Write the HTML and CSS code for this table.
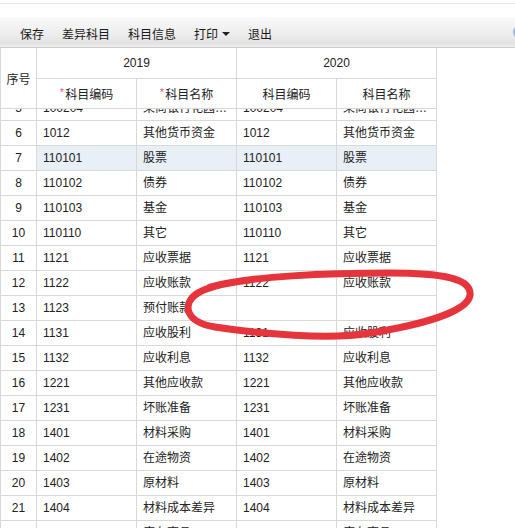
FILE: index.html
```html
<!DOCTYPE html>
<html lang="zh">
<head>
<meta charset="utf-8">
<title>科目对照</title>
<link rel="stylesheet" href="styles.css">
</head>
<body>
<div class="page">
  <div class="topline"></div>
  <div class="toolbar">
    <span class="tb-item">保存</span>
    <span class="tb-item">差异科目</span>
    <span class="tb-item">科目信息</span>
    <span class="tb-item tb-drop">打印<i class="caret"></i></span>
    <span class="tb-item">退出</span>
    <span class="tb-edge"></span>
  </div>
  <div class="grid-head">
    <div class="hc seq-h">序号</div>
    <div class="hc year">2019</div>
    <div class="hc year">2020</div>
    <div class="hc"><span class="req">*</span>科目编码</div>
    <div class="hc"><span class="req">*</span>科目名称</div>
    <div class="hc">科目编码</div>
    <div class="hc">科目名称</div>
  </div>
  <div class="body-wrap">
    <div class="grid-body">
      <div class="row"><div class="c seq">5</div><div class="c">100204</div><div class="c">某商银行花园支行</div><div class="c">100204</div><div class="c">某商银行花园支行</div></div>
      <div class="row"><div class="c seq">6</div><div class="c">1012</div><div class="c">其他货币资金</div><div class="c">1012</div><div class="c">其他货币资金</div></div>
      <div class="row sel"><div class="c seq">7</div><div class="c">110101</div><div class="c">股票</div><div class="c">110101</div><div class="c">股票</div></div>
      <div class="row"><div class="c seq">8</div><div class="c">110102</div><div class="c">债券</div><div class="c">110102</div><div class="c">债券</div></div>
      <div class="row"><div class="c seq">9</div><div class="c">110103</div><div class="c">基金</div><div class="c">110103</div><div class="c">基金</div></div>
      <div class="row"><div class="c seq">10</div><div class="c">110110</div><div class="c">其它</div><div class="c">110110</div><div class="c">其它</div></div>
      <div class="row"><div class="c seq">11</div><div class="c">1121</div><div class="c">应收票据</div><div class="c">1121</div><div class="c">应收票据</div></div>
      <div class="row"><div class="c seq">12</div><div class="c">1122</div><div class="c">应收账款</div><div class="c">1122</div><div class="c">应收账款</div></div>
      <div class="row"><div class="c seq">13</div><div class="c">1123</div><div class="c">预付账款</div><div class="c"></div><div class="c"></div></div>
      <div class="row"><div class="c seq">14</div><div class="c">1131</div><div class="c">应收股利</div><div class="c">1131</div><div class="c">应收股利</div></div>
      <div class="row"><div class="c seq">15</div><div class="c">1132</div><div class="c">应收利息</div><div class="c">1132</div><div class="c">应收利息</div></div>
      <div class="row"><div class="c seq">16</div><div class="c">1221</div><div class="c">其他应收款</div><div class="c">1221</div><div class="c">其他应收款</div></div>
      <div class="row"><div class="c seq">17</div><div class="c">1231</div><div class="c">坏账准备</div><div class="c">1231</div><div class="c">坏账准备</div></div>
      <div class="row"><div class="c seq">18</div><div class="c">1401</div><div class="c">材料采购</div><div class="c">1401</div><div class="c">材料采购</div></div>
      <div class="row"><div class="c seq">19</div><div class="c">1402</div><div class="c">在途物资</div><div class="c">1402</div><div class="c">在途物资</div></div>
      <div class="row"><div class="c seq">20</div><div class="c">1403</div><div class="c">原材料</div><div class="c">1403</div><div class="c">原材料</div></div>
      <div class="row"><div class="c seq">21</div><div class="c">1404</div><div class="c">材料成本差异</div><div class="c">1404</div><div class="c">材料成本差异</div></div>
      <div class="row"><div class="c seq">22</div><div class="c">1405</div><div class="c">库存商品</div><div class="c">1405</div><div class="c">库存商品</div></div>
    </div>
  </div>
  <svg class="mark" width="515" height="528" viewBox="0 0 515 528" aria-hidden="true">
    <path d="M 210 287 C 250 276, 330 273, 390 273 C 440 273, 472 278, 470 295 C 468 312, 420 325, 370 333 C 330 340, 260 334, 215 327 C 185 322, 183 305, 195 295 C 205 287, 225 283, 250 280" fill="none" stroke="#e6343c" stroke-width="7" stroke-linecap="round" stroke-linejoin="round"/>
  </svg>
</div>
</body>
</html>
```
FILE: styles.css
```css
* { box-sizing: border-box; }
html, body { margin: 0; height: 100%; }
body {
  font-family: "Liberation Sans", "Noto Sans CJK SC", sans-serif;
  font-size: 12px;
  color: #222;
  background: #fff;
}
.page {
  position: relative;
  height: 100%;
  display: flex;
  flex-direction: column;
  overflow: hidden;
  padding-top: 3px;
}
.topline {
  height: 1px;
  background: #e8e8e8;
  margin-bottom: 13px;
  flex-shrink: 0;
}
.toolbar {
  position: relative;
  flex-shrink: 0;
  height: 31px;
  padding: 2px 0 0 20px;
  display: flex;
  align-items: center;
  gap: 18px;
  background: linear-gradient(#f9f9f9, #ececec 60%, #e2e2e2 88%, #f0f0f0);
  border-bottom: 1px solid #cccccc;
}
.tb-item { white-space: nowrap; color: #1a1a1a; }
.tb-drop { display: flex; align-items: center; gap: 4px; }
.caret {
  display: inline-block;
  width: 0; height: 0;
  border-left: 4px solid transparent;
  border-right: 4px solid transparent;
  border-top: 4px solid #222;
  margin-top: 2px;
}
.tb-edge {
  position: absolute;
  right: -8px;
  top: 9px;
  width: 10px;
  height: 12px;
  border-radius: 50%;
  border: 2px solid #9fb6d6;
}
.grid-head {
  flex-shrink: 0;
  display: grid;
  grid-template-columns: 37px repeat(4, 100px);
  grid-template-rows: 31px 30px;
  width: 437px;
}
.hc {
  display: flex;
  align-items: center;
  justify-content: center;
  border-right: 1px solid #d9d9d9;
  border-bottom: 1px solid #d9d9d9;
  color: #222;
  white-space: nowrap;
}
.seq-h { grid-row: 1 / span 2; border-left: 1px solid #d9d9d9; }
.year { grid-column: span 2; }
.req { color: #e0607a; font-size: 11px; margin-right: 1px; position: relative; top: -2px; }
.body-wrap { flex: 1; overflow: hidden; }
.grid-body { margin-top: -13px; width: 437px; }
.row {
  display: grid;
  grid-template-columns: 37px repeat(4, 100px);
  height: 25px;
}
.c {
  border-right: 1px solid #d9d9d9;
  border-bottom: 1px solid #d9d9d9;
  padding: 0 6px;
  line-height: 24px;
  white-space: nowrap;
  overflow: hidden;
  text-overflow: ellipsis;
}
.c.seq { border-left: 1px solid #d9d9d9; text-align: center; padding: 0; }
.row.sel .c:not(.seq) { background: #e9eff6; }
.mark { position: absolute; left: 0; top: 0; pointer-events: none; }
```
